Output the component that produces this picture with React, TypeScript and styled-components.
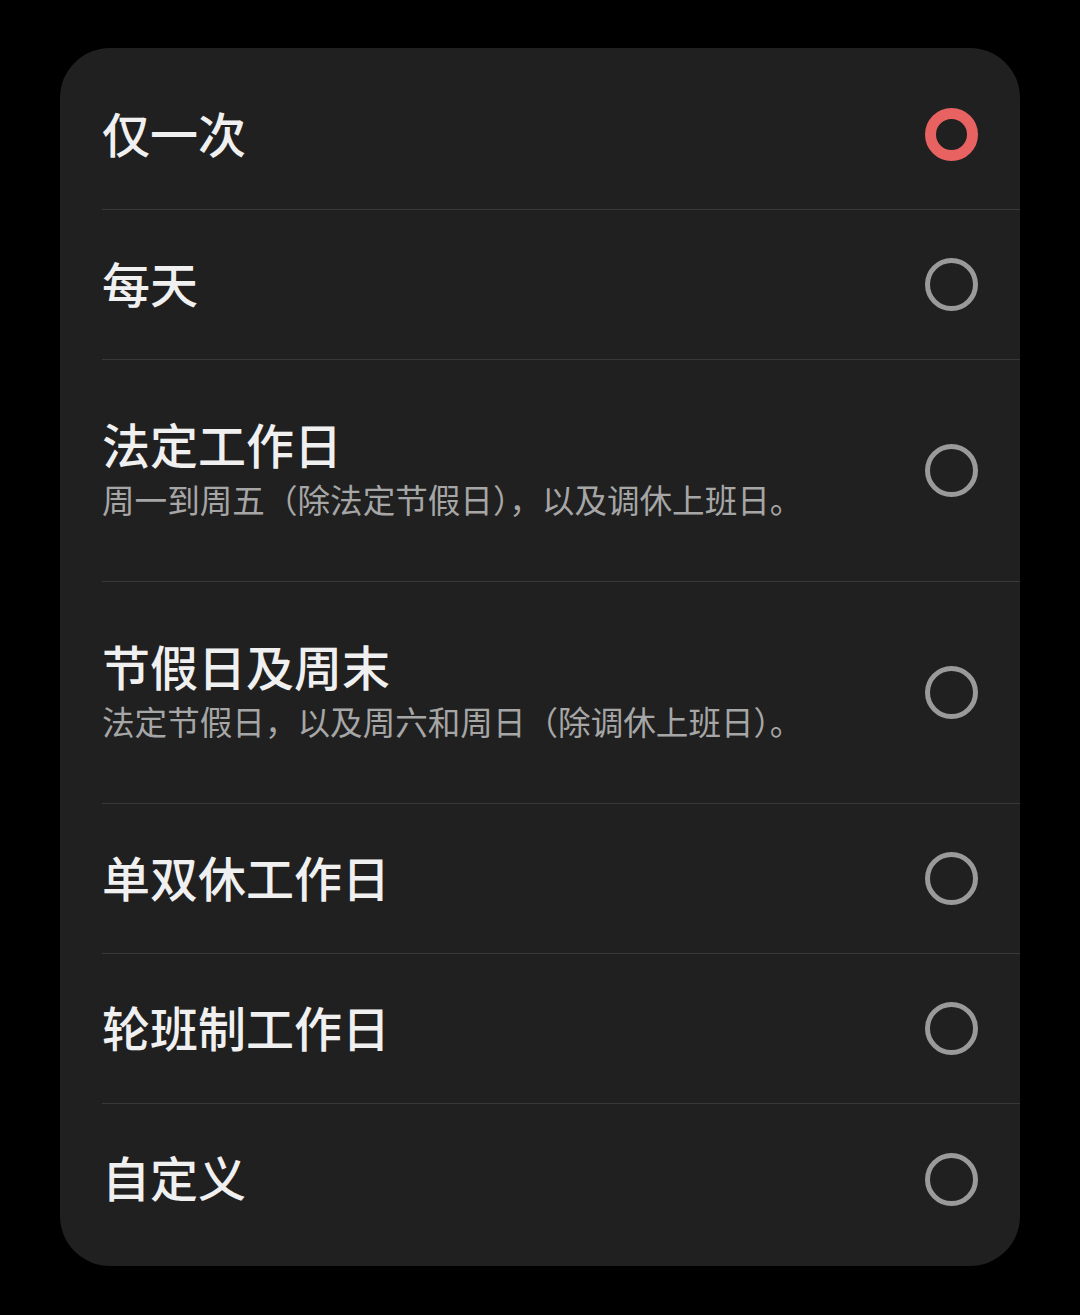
import styled, { createGlobalStyle } from 'styled-components';
import { useState } from 'react';

const GlobalStyle = createGlobalStyle`
  html, body {
    margin: 0;
    padding: 0;
    background: #000;
  }
  body {
    font-family: "Noto Sans CJK SC", "Noto Sans", sans-serif;
  }
`;

const Page = styled.div`
  min-height: 1315px;
  box-sizing: border-box;
  padding: 48px 60px 0 60px;
  background: #000;
`;

const Card = styled.div`
  background: #202020;
  border-radius: 50px;
  padding: 12px 0;
  overflow: hidden;
`;

const Row = styled.div<{ $tall?: boolean; $last?: boolean }>`
  display: flex;
  align-items: center;
  justify-content: space-between;
  height: ${(p) => (p.$tall ? 222 : 150)}px;
  box-sizing: border-box;
  margin-left: 42px;
  padding-right: 42px;
  border-bottom: ${(p) => (p.$last ? 'none' : '1px solid #383838')};
  cursor: pointer;
`;

const TextBlock = styled.div`
  display: flex;
  flex-direction: column;
  gap: 6px;
  padding-bottom: 6px;
`;

const Title = styled.div<{ $single?: boolean }>`
  font-size: 48px;
  line-height: 56px;
  font-weight: 500;
  color: #f0f0f0;
  padding-bottom: ${(p) => (p.$single ? 6 : 0)}px;
`;

const Sub = styled.div`
  font-size: 32.6px;
  line-height: 44px;
  color: #a6a6a6;
`;

const Radio = styled.div<{ $on: boolean }>`
  width: 53px;
  height: 53px;
  box-sizing: border-box;
  border-radius: 50%;
  flex-shrink: 0;
  border: ${(p) => (p.$on ? '11px solid #e86262' : '5px solid #9a9a9a')};
`;

const options = [
  { title: '仅一次' },
  { title: '每天' },
  { title: '法定工作日', sub: '周一到周五（除法定节假日），以及调休上班日。' },
  { title: '节假日及周末', sub: '法定节假日，以及周六和周日（除调休上班日）。' },
  { title: '单双休工作日' },
  { title: '轮班制工作日' },
  { title: '自定义' },
];

export default function App() {
  const [selected, setSelected] = useState(0);

  return (
    <Page>
      <GlobalStyle />
      <Card>
        {options.map((o, i) => (
          <Row
            key={o.title}
            $tall={!!o.sub}
            $last={i === options.length - 1}
            onClick={() => setSelected(i)}
          >
            {o.sub ? (
              <TextBlock>
                <Title>{o.title}</Title>
                <Sub>{o.sub}</Sub>
              </TextBlock>
            ) : (
              <Title $single>{o.title}</Title>
            )}
            <Radio $on={selected === i} />
          </Row>
        ))}
      </Card>
    </Page>
  );
}
